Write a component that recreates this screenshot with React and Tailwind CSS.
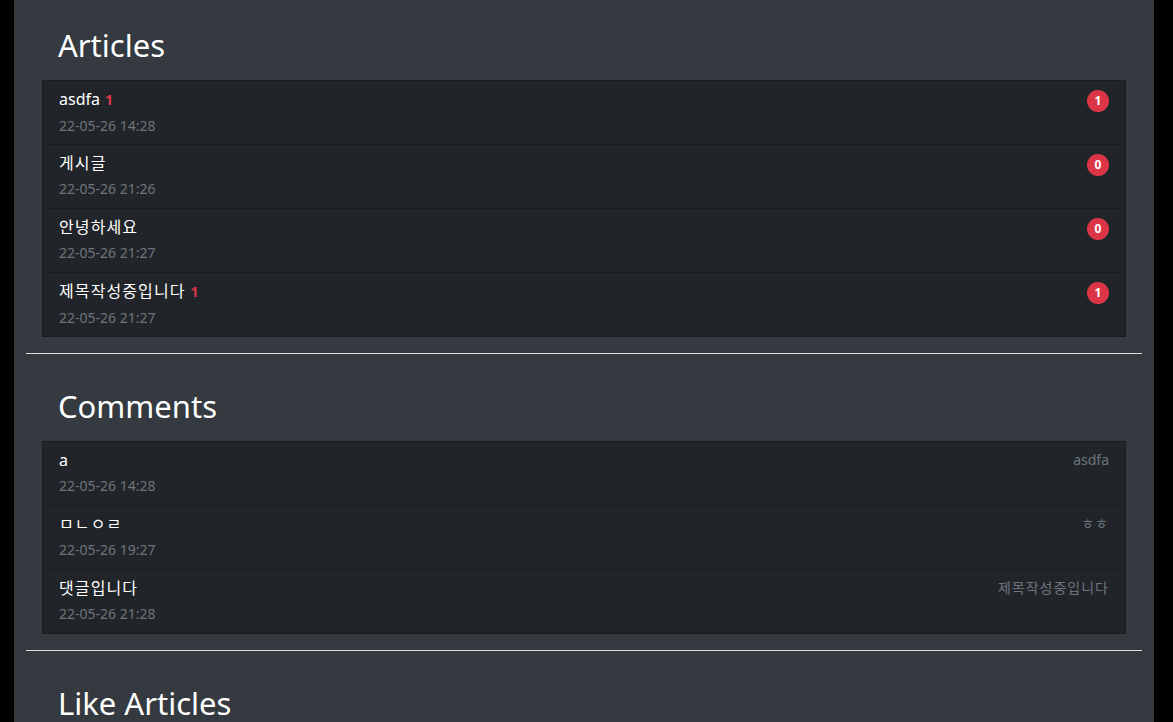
const articles = [
  { title: "asdfa", count: 1, date: "22-05-26 14:28" },
  { title: "게시글", count: 0, date: "22-05-26 21:26" },
  { title: "안녕하세요", count: 0, date: "22-05-26 21:27" },
  { title: "제목작성중입니다", count: 1, date: "22-05-26 21:27" },
];

const comments = [
  { content: "a", article: "asdfa", date: "22-05-26 14:28" },
  { content: "ㅁㄴㅇㄹ", article: "ㅎㅎ", date: "22-05-26 19:27" },
  { content: "댓글입니다", article: "제목작성중입니다", date: "22-05-26 21:28" },
];

const isKo = (s) => /[\u3131-\uD79D]/.test(s);

function Heading({ children }) {
  return (
    <h2 className="px-4 text-[31px] leading-[38px] font-normal text-white mb-[16px]">
      {children}
    </h2>
  );
}

function Row({ children }) {
  return (
    <li className="flex justify-between items-start px-4 pt-[6px] h-[64px] last:h-[63px] border-b border-[#1a1d20] last:border-b-0">
      {children}
    </li>
  );
}

export default function App() {
  return (
    <div
      className="min-h-screen bg-black"
      style={{ fontFamily: '"Noto Sans", "Noto Sans CJK KR", sans-serif' }}
    >
      <div className="ml-[14px] w-[1140px] min-h-screen bg-[#343a40] px-3 pt-[26px] pb-10">
        <section className="px-4">
          <Heading>Articles</Heading>
          <ul className="bg-[#212529] border border-[#1a1d20]">
            {articles.map((a, i) => (
              <Row key={i}>
                <div>
                  <div className="text-[16px] leading-6 text-white">
                    <span className={isKo(a.title) ? "tracking-[1.1px]" : ""}>{a.title}</span>
                    {a.count > 0 && (
                      <span className="ml-[5px] text-[14px] font-bold text-[#dc3545]">
                        {a.count}
                      </span>
                    )}
                  </div>
                  <div className="mt-[3px] text-[14px] leading-[21px] text-[#6c757d]">
                    {a.date}
                  </div>
                </div>
                <span className="mt-[3px] w-[22px] h-[22px] rounded-full bg-[#dc3545] text-white text-[12px] font-bold flex items-center justify-center">
                  {a.count}
                </span>
              </Row>
            ))}
          </ul>
        </section>

        <hr className="mt-4 mb-[33px] border-0 border-t border-[#dcdcdc]" />

        <section className="px-4">
          <Heading>Comments</Heading>
          <ul className="bg-[#212529] border border-[#1a1d20]">
            {comments.map((c, i) => (
              <Row key={i}>
                <div>
                  <div
                    className={
                      isKo(c.content)
                        ? "text-[16px] leading-6 text-white tracking-[1.1px]"
                        : "text-[16px] leading-6 text-white"
                    }
                  >
                    {c.content}
                  </div>
                  <div className="mt-[3px] text-[14px] leading-[21px] text-[#6c757d]">
                    {c.date}
                  </div>
                </div>
                <span
                  className={
                    isKo(c.article)
                      ? "text-[14px] leading-6 text-[#6c757d] tracking-[1px]"
                      : "text-[14px] leading-6 text-[#6c757d]"
                  }
                >
                  {c.article}
                </span>
              </Row>
            ))}
          </ul>
        </section>

        <hr className="mt-4 mb-[33px] border-0 border-t border-[#dcdcdc]" />

        <section className="px-4">
          <Heading>Like Articles</Heading>
        </section>
      </div>
    </div>
  );
}
